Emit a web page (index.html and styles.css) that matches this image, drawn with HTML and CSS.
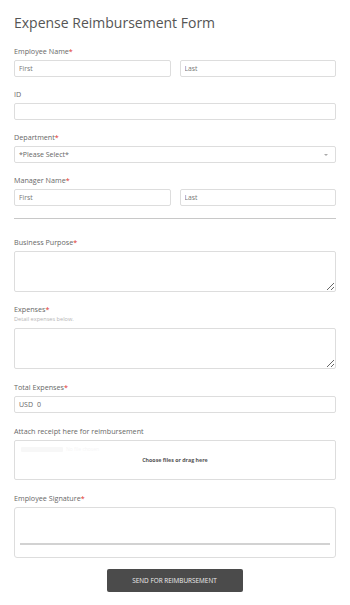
FILE: index.html
```html
<!DOCTYPE html>
<html lang="en">
<head>
  <meta charset="UTF-8">
  <meta name="viewport" content="width=device-width, initial-scale=1.0">
  <title>Expense Reimbursement Form</title>
  <link rel="stylesheet" href="styles.css">
</head>
<body>
  <form class="form">
    <h1 class="title">Expense Reimbursement Form</h1>

    <div class="field">
      <label class="label">Employee Name<span class="req">*</span></label>
      <div class="pair">
        <input type="text" class="input" placeholder="First">
        <input type="text" class="input" placeholder="Last">
      </div>
    </div>

    <div class="field">
      <label class="label">ID</label>
      <input type="text" class="input">
    </div>

    <div class="field">
      <label class="label">Department<span class="req">*</span></label>
      <div class="select">
        <span>*Please Select*</span>
        <span class="caret"></span>
      </div>
    </div>

    <div class="field">
      <label class="label">Manager Name<span class="req">*</span></label>
      <div class="pair">
        <input type="text" class="input" placeholder="First">
        <input type="text" class="input" placeholder="Last">
      </div>
    </div>

    <hr class="divider">

    <div class="field">
      <label class="label">Business Purpose<span class="req">*</span></label>
      <textarea class="area"></textarea>
    </div>

    <div class="field">
      <label class="label">Expenses<span class="req">*</span></label>
      <span class="sublabel">Detail expenses below.</span>
      <textarea class="area"></textarea>
    </div>

    <div class="field later">
      <label class="label">Total Expenses<span class="req">*</span></label>
      <div class="money">
        <span class="cur">USD</span>
        <span>0</span>
      </div>
    </div>

    <div class="field later">
      <label class="label">Attach receipt here for reimbursement</label>
      <div class="upload">
        <span class="ghost"><span class="ghost-btn"></span>No file chosen</span>
        <span class="drop">Choose files or drag here</span>
      </div>
    </div>

    <div class="field later">
      <label class="label">Employee Signature<span class="req">*</span></label>
      <div class="signature">
        <div class="sig-line"></div>
      </div>
    </div>

    <div class="actions">
      <button type="button" class="submit">SEND FOR REIMBURSEMENT</button>
    </div>
  </form>
</body>
</html>
```

FILE: styles.css
```css
* {
  box-sizing: border-box;
}
body {
  margin: 0;
  background: #fff;
  font-family: "Open Sans", "Liberation Sans", sans-serif;
  color: #555;
}
.form {
  display: flex;
  flex-direction: column;
  gap: 11px;
  padding: 12px 14px 0 14px;
}
.title {
  margin: 0;
  font-size: 14px;
  font-weight: 400;
  line-height: 22px;
  color: #555;
}
.field {
  display: flex;
  flex-direction: column;
}
.field.later {
  margin-top: 1px;
}
.label {
  font-size: 7.2px;
  line-height: 12px;
  color: #686868;
  margin-bottom: 3px;
}
.req {
  color: #e0302b;
}
.sublabel {
  font-size: 5.6px;
  line-height: 7px;
  color: #b5b5b5;
  margin: -2px 0 5px;
}
.pair {
  display: flex;
  gap: 9px;
}
.pair .input {
  flex: 1;
}
.input {
  width: 100%;
  height: 17px;
  border: 1px solid #ddd;
  border-radius: 2px;
  padding: 0 4px;
  font-family: inherit;
  font-size: 6.8px;
  color: #666;
  outline: none;
}
.input::placeholder {
  color: #777;
}
.select {
  display: flex;
  justify-content: space-between;
  align-items: center;
  height: 17px;
  border: 1px solid #ddd;
  border-radius: 2px;
  padding: 0 7px 0 4px;
  font-size: 7px;
  color: #666;
}
.caret {
  width: 0;
  height: 0;
  border-left: 2.5px solid transparent;
  border-right: 2.5px solid transparent;
  border-top: 2.5px solid #aaa;
}
.divider {
  width: 100%;
  margin: 1px 0 6px;
  border: 0;
  border-top: 1px solid #c8c8c8;
}
.area {
  display: block;
  width: 100%;
  height: 41px;
  border: 1px solid #ddd;
  border-radius: 2px;
  resize: vertical;
  outline: none;
}
.money {
  display: flex;
  align-items: center;
  gap: 4px;
  height: 17px;
  border: 1px solid #ddd;
  border-radius: 2px;
  padding: 0 4px;
  font-size: 7px;
  color: #666;
}
.upload {
  position: relative;
  display: flex;
  align-items: center;
  justify-content: center;
  height: 40px;
  border: 1px solid #ddd;
  border-radius: 2px;
}
.ghost {
  position: absolute;
  top: 5px;
  left: 6px;
  display: flex;
  align-items: center;
  gap: 3px;
  font-size: 5px;
  color: #f6f6f6;
}
.ghost-btn {
  width: 42px;
  height: 5px;
  background: #f7f7f7;
  border-radius: 1px;
}
.drop {
  font-size: 5.3px;
  font-weight: 700;
  color: #555;
}
.signature {
  display: flex;
  flex-direction: column;
  justify-content: flex-end;
  height: 51px;
  border: 1px solid #ddd;
  border-radius: 3px;
  padding: 0 5px 12px;
}
.sig-line {
  height: 2px;
  background: #d2d2d2;
}
.actions {
  display: flex;
  justify-content: center;
  padding-right: 1px;
}
.submit {
  width: 136px;
  height: 23px;
  border: none;
  border-radius: 2px;
  background: #4b4b4b;
  color: #eee;
  font-family: inherit;
  font-size: 6.4px;
  cursor: pointer;
}
```
